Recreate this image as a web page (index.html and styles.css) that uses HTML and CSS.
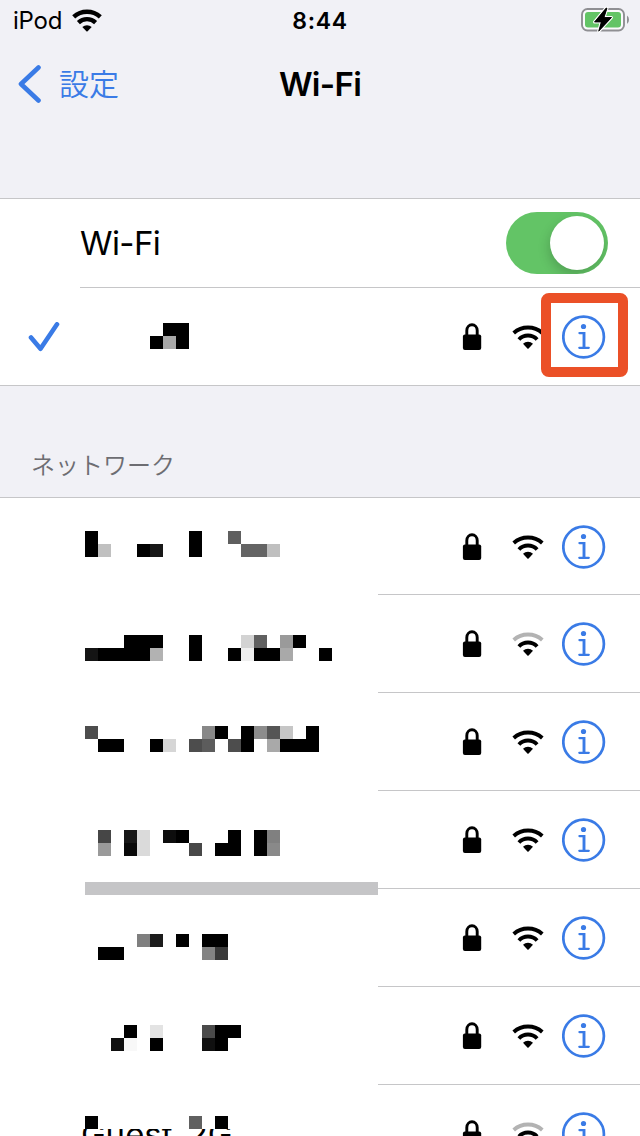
FILE: index.html
```
<!DOCTYPE html>
<html lang="ja">
<head>
<meta charset="utf-8">
<title>Wi-Fi</title>
<link rel="stylesheet" href="styles.css">
</head>
<body>
<svg class="defs" width="0" height="0">
  <symbol id="lock" viewBox="0 0 20 28">
    <rect x="0.900" y="11.500" width="18.300" height="15.500" rx="2"/>
    <path d="M4.800 13V7.400A5.200 5.700 0 0 1 15.200 7.400V13" fill="none" stroke="currentColor" stroke-width="2.900"/>
  </symbol>
  <symbol id="wifi" viewBox="0 0 32 24">
    <path class="outer" d="M1.700 8A21.500 21.500 0 0 1 30.300 8" fill="none" stroke="currentColor" stroke-width="3.900"/>
    <path d="M6.900 14.500A12.500 12.500 0 0 1 25.100 14.500" fill="none" stroke="currentColor" stroke-width="3.900"/>
    <path d="M11 18.700A7.500 7.500 0 0 1 21 18.700L16.600 23.400Q16 23.900 15.400 23.400Z"/>
  </symbol>
  <symbol id="info" viewBox="0 0 44 44">
    <circle cx="21.600" cy="22" r="20.300" fill="none" stroke="currentColor" stroke-width="2.700"/>
    <circle cx="21.500" cy="11.500" r="2.600"/>
    <path d="M17.400 18.100H21.500M17.300 32.800H26.800" fill="none" stroke="currentColor" stroke-width="2.200" stroke-linecap="round"/>
    <path d="M22 17V32.500" stroke="currentColor" stroke-width="2.900"/>
  </symbol>
</svg>

<header class="status">
  <span class="device">iPod</span>
  <svg class="status-wifi" viewBox="0 0 30 23">
    <path d="M1.700 7.900A20 20 0 0 1 28.300 7.900" fill="none" stroke="currentColor" stroke-width="4.500"/>
    <path d="M6.400 13.600A12.300 12.300 0 0 1 23.600 13.600" fill="none" stroke="currentColor" stroke-width="4.300"/>
    <path d="M10.300 18A7 7 0 0 1 19.700 18L15.600 22.300Q15 22.800 14.400 22.300Z"/>
  </svg>
  <span class="time">8:44</span>
  <svg class="battery" viewBox="0 0 50 28">
    <rect x="2" y="3" width="42" height="21.500" rx="5.500" fill="#fafafc" stroke="#8f8f93" stroke-width="1.900"/>
    <rect x="5" y="6" width="36" height="15.500" rx="3" fill="#63c466"/>
    <path d="M47 9.500Q49 11 49 13.700T47 18Z" fill="#8f8f93"/>
    <path d="M26 2.200L14.500 16H21.300L18.700 25.200L31.500 11.500H24L27 2.200Z" fill="#000" stroke="#fff" stroke-width="3" paint-order="stroke" stroke-linejoin="round"/>
    <path d="M26 2.200L14.500 16H21.300L18.700 25.200L31.500 11.500H24L27 2.200Z" fill="#000" stroke="#000" stroke-width="0.800" stroke-linejoin="round"/>
  </svg>
</header>

<nav class="nav">
  <a class="back"><svg class="chevron" viewBox="0 0 24 40"><path d="M20.500 3.500L3 20L20.500 36.500"/></svg><span class="back-label">設定</span></a>
  <h1 class="title">Wi-Fi</h1>
</nav>

<section class="current">
  <div class="switch-row">
    <span class="label">Wi-Fi</span>
    <span class="switch"><span class="knob"></span></span>
  </div>
  <div class="joined">
    <svg class="check" viewBox="0 0 32 32"><path d="M3 15.500L12.500 26.800L29 2.300"/></svg>
    <div class="joined-body">
      <svg class="joined-name" viewBox="0 0 3 2"><path d="M1 0h2v2h-1v-1h-1zM0 1h1v1h-1z"/><path fill="#a8a8a8" d="M1 1h1v1h-1z"/></svg>
      <div class="icons">
        <svg class="lock"><use href="#lock"/></svg>
        <svg class="wifi"><use href="#wifi"/></svg>
        <span class="info-wrap"><svg class="info"><use href="#info"/></svg><span class="highlight"></span></span>
      </div>
    </div>
  </div>
</section>

<h2 class="heading">ネットワーク</h2>

<main class="networks" id="networks"></main>
<script src="networks.js"></script>
</body>
</html>
```
FILE: styles.css
```
* { box-sizing: border-box; }
body {
  margin: 0;
  width: 640px;
  height: 1136px;
  overflow: hidden;
  background: #f1f1f6;
  color: #000;
  font-family: Inter, "Noto Sans CJK JP", sans-serif;
  display: flex;
  flex-direction: column;
}
svg { display: block; flex: none; fill: currentColor; }
.defs { position: absolute; }

.status {
  display: grid;
  grid-template-columns: 60px 180px 160px 1fr;
  height: 40px;
  align-items: center;
  flex: none;
}
.device { padding: 0 0 0 13px; font-size: 24px; letter-spacing: -.2px; white-space: nowrap; line-height: 42px; }
.status-wifi { width: 30px; height: 23px; margin: -1px 0 0 12px; }
.time { text-align: center; font-size: 23px; font-weight: 600; letter-spacing: .7px; line-height: 42px; }
.battery { width: 50px; height: 28px; justify-self: end; margin-right: 10px; margin-top: -2px; }

.nav {
  display: grid;
  grid-template-columns: 200px 240px 200px;
  align-items: center;
  height: 88px;
  margin-bottom: 70px;
  flex: none;
}
.back { display: flex; align-items: center; gap: 17px; padding-left: 18px; color: #3a7be6; }
.back-label { margin-top: -4px; font: 350 30px/44px "Noto Sans CJK JP", sans-serif; }
.chevron { width: 24px; height: 40px; }
.chevron path { fill: none; stroke: currentColor; stroke-width: 4.600; stroke-linecap: round; stroke-linejoin: round; }
.title { margin: 0; text-align: center; font-size: 33px; font-weight: 600; line-height: 44px; letter-spacing: -.7px; }

.current { height: 188px; background: #fff; border-top: 1px solid #c6c6c8; border-bottom: 1px solid #c6c6c8; flex: none; }
.switch-row { display: flex; align-items: center; justify-content: space-between; height: 88px; padding: 0 32px 0 80px; }
.label { font-size: 33px; line-height: 44px; letter-spacing: -.6px; }
.switch { display: flex; align-items: center; justify-content: flex-end; width: 102px; height: 62px; padding: 4px; border-radius: 31px; background: #63c466; overflow: hidden; }
.knob { width: 54px; height: 54px; border-radius: 50%; background: #fff; box-shadow: -1px 5px 12px rgba(0,0,0,.18); }
.joined { display: flex; align-items: center; height: 98px; }
.check { width: 32px; height: 32px; margin: 3px 20px 0 28px; }
.check path { fill: none; stroke: #3a7be6; stroke-width: 4.600; stroke-linecap: round; stroke-linejoin: round; }
.joined-body { display: flex; align-items: center; justify-content: space-between; flex: 1; height: 98px; padding-left: 70px; border-top: 1px solid #c6c6c8; }
.joined-name { width: 39px; height: 26px; margin-top: -1px; shape-rendering: crispEdges; }

.icons { display: flex; align-items: center; padding-right: 34px; }
.lock { width: 20px; height: 28px; margin-right: 30px; }
.wifi { width: 32px; height: 24px; margin-right: 18px; }
.info-wrap { position: relative; }
.info { width: 44px; height: 44px; color: #3a7be6; }
.highlight { position: absolute; left: -21px; top: -22px; width: 87px; height: 84px; border-radius: 8px; border: 10px solid #eb5027; }

.heading { margin: 0; height: 111px; padding: 59px 0 0 31px; font: 350 24px/38px "Noto Sans CJK JP", sans-serif; color: #6d6d72; flex: none; }

.networks { background: #fff; flex: none; }
.network { display: flex; height: 98px; }
.network:first-child { height: 97px; }
.name { width: 378px; padding-left: 80px; }
.pixels { width: 298px; overflow: visible; shape-rendering: crispEdges; }
.side { flex: 1; display: flex; align-items: center; justify-content: flex-end; border-top: 1px solid #c6c6c8; }
.side .icons { margin-top: 1px; }
.network:first-child .name { border-top: 1px solid #c6c6c8; }
.ssid-clip { height: 40px; overflow: hidden; }
.ssid { margin-top: -15px; padding-left: 1px; font-size: 33px; line-height: 41px; white-space: pre; }
```
FILE: networks.js
```
// Masked names: each cell is [row, column, span, grey level] on a 13px grid.
const SIZE = 13;
const networks = [
  { top: 33, cells: [[0,0,1,0],[1,0,1,0],[1,1,1,192],[1,4,1,0],[1,5,1,24],[0,8,1,0],[1,8,1,0],[0,11,1,95],[1,12,2,100],[1,14,1,191]] },
  { top: 41, weak: true, cells: [[0,3,3,0],[0,8,1,0],[0,12,1,211],[0,13,1,96],[0,15,1,154],[0,16,1,0],[1,0,1,20],[1,1,4,0],[1,5,1,178],[1,8,1,0],[1,11,1,0],[1,12,1,239],[1,13,2,0],[1,15,1,169],[1,18,1,0]] },
  { top: 34, cells: [[0,0,1,77],[0,9,1,136],[0,10,1,0],[0,12,1,0],[0,13,1,140],[0,14,1,85],[0,15,1,198],[0,17,1,0],[1,1,2,0],[1,5,1,0],[1,6,1,214],[1,8,1,77],[1,9,1,92],[1,11,1,77],[1,12,1,0],[1,14,1,169],[1,15,3,0]] },
  { top: 40, bar: true, cells: [[0,1,1,70],[0,3,1,23],[0,4,1,218],[0,6,1,13],[0,7,1,0],[0,11,1,0],[0,13,1,0],[0,14,1,128],[1,1,1,154],[1,3,1,8],[1,4,1,218],[1,8,1,72],[1,10,2,0],[1,13,1,0],[1,14,1,137]] },
  { top: 46, cells: [[0,4,1,127],[0,5,1,28],[0,7,1,0],[0,9,2,0],[1,1,2,0],[1,9,1,131],[1,10,1,58]] },
  { top: 39, cells: [[0,3,1,0],[0,5,1,227],[0,9,1,74],[0,10,2,0],[1,2,1,16],[1,3,1,248],[1,5,1,0],[1,9,1,16],[1,10,1,0]] },
  { top: 32, weak: true, ssid: "Guest_2G", cells: [[0,0,1,0],[0,8,1,96],[0,10,1,0]] }
];

function rect(x, y, w, h, fill) {
  return `<rect x="${x}" y="${y}" width="${w}" height="${h}" fill="${fill}"/>`;
}

function icon(name) {
  return `<svg class="${name}"><use href="#${name}"/></svg>`;
}

document.getElementById("networks").innerHTML = networks.map(n => {
  const cells = n.cells.map(([r, c, w, g]) => rect(5 + c * SIZE, r * SIZE, w * SIZE, SIZE, `rgb(${g},${g},${g})`)).join("");
  const bar = n.bar ? rect(5, 52, 293, 13, "#c5c5c7") : "";
  const text = n.ssid ? `<div class="ssid-clip"><div class="ssid">${n.ssid}</div></div>` : "";
  const wifi = n.weak
    ? `<svg class="wifi" viewBox="0 0 32 24"><path d="M1.700 8A21.500 21.500 0 0 1 30.300 8" fill="none" stroke="#b3b3b3" stroke-width="3.900"/><path d="M6.900 14.500A12.500 12.500 0 0 1 25.100 14.500" fill="none" stroke="#000" stroke-width="3.900"/><path d="M11 18.700A7.500 7.500 0 0 1 21 18.700L16.600 23.400Q16 23.900 15.400 23.400Z"/></svg>`
    : icon("wifi");
  const height = n.ssid ? 13 : 26;
  return `<div class="network"><div class="name"><svg class="pixels" height="${height}" style="margin-top:${n.top}px">${cells}${bar}</svg>${text}</div><div class="side"><div class="icons">${icon("lock")}${wifi}${icon("info")}</div></div></div>`;
}).join("");
```
